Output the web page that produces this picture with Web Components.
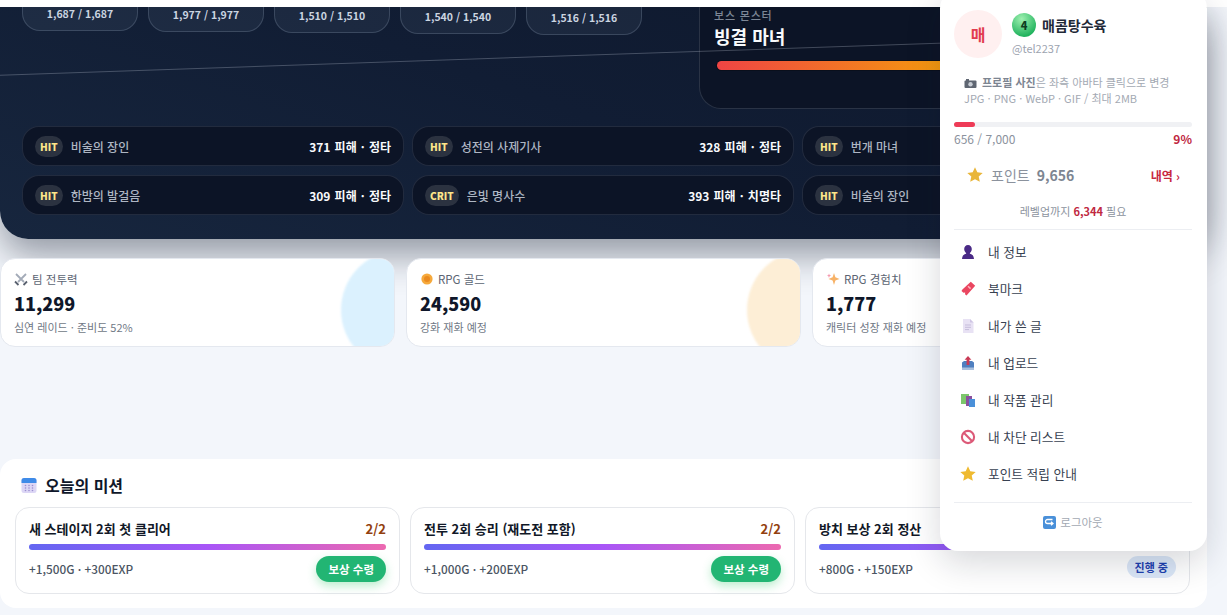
<!doctype html>
<html lang="ko">
<head>
<meta charset="utf-8">
<title>RPG</title>
<style>
  html, body { margin: 0; height: 100%; overflow: hidden; background: #f3f6fb; }
  body { font-family: "Noto Sans CJK KR", "Noto Sans", sans-serif; }
</style>
</head>
<body>
<rpg-page>
  <rpg-hero>
    <party-chip slot="party" hp="1,687 / 1,687" lift="-10"></party-chip>
    <party-chip slot="party" hp="1,977 / 1,977" lift="-9"></party-chip>
    <party-chip slot="party" hp="1,510 / 1,510" lift="-8"></party-chip>
    <party-chip slot="party" hp="1,540 / 1,540" lift="-7"></party-chip>
    <party-chip slot="party" hp="1,516 / 1,516" lift="-6" active></party-chip>
    <hit-row slot="log" tag="HIT" who="비술의 장인" what="371 피해 · 정타"></hit-row>
    <hit-row slot="log" tag="HIT" who="성전의 사제기사" what="328 피해 · 정타"></hit-row>
    <hit-row slot="log" tag="HIT" who="번개 마녀" what="352 피해 · 정타"></hit-row>
    <hit-row slot="log" tag="HIT" who="한밤의 발걸음" what="309 피해 · 정타"></hit-row>
    <hit-row slot="log" tag="CRIT" who="은빛 명사수" what="393 피해 · 치명타"></hit-row>
    <hit-row slot="log" tag="HIT" who="비술의 장인" what="340 피해 · 정타"></hit-row>
  </rpg-hero>

  <stat-row>
    <stat-card label="팀 전투력" value="11,299" sub="심연 레이드 · 준비도 52%" blob="#dbf1fe">
      <svg slot="icon" width="14" height="14" viewBox="0 0 14 14"><path d="M2 2l8 8M12 2l-8 8" stroke="#a3abb8" stroke-width="1.800"/><path d="M1 9.500l3.500 3.500M13 9.500L9.500 13" stroke="#59616f" stroke-width="1.800"/></svg>
    </stat-card>
    <stat-card label="RPG 골드" value="24,590" sub="강화 재화 예정" blob="#fdeed6">
      <svg slot="icon" width="14" height="14" viewBox="0 0 14 14"><circle cx="7" cy="7" r="5.600" fill="#f6a93b"/><circle cx="7" cy="7" r="3" fill="#ea8a1f"/></svg>
    </stat-card>
    <stat-card label="RPG 경험치" value="1,777" sub="캐릭터 성장 재화 예정" blob="#e9e5fd">
      <svg slot="icon" width="14" height="14" viewBox="0 0 14 14"><path d="M8 1l1.400 4.200L13.500 7 9.400 8.600 8 13 6.600 8.600 2.500 7l4.100-1.800z" fill="#f7b267"/><path d="M3 1.500l.6 1.600 1.500.6-1.500.6L3 6l-.6-1.700L1 3.700l1.400-.6z" fill="#f59ab0"/></svg>
    </stat-card>
  </stat-row>

  <mission-panel heading="오늘의 미션">
    <mission-card name="새 스테이지 2회 첫 클리어" count="2/2" reward="+1,500G · +300EXP" state="done"></mission-card>
    <mission-card name="전투 2회 승리 (재도전 포함)" count="2/2" reward="+1,000G · +200EXP" state="done"></mission-card>
    <mission-card name="방치 보상 2회 정산" count="2/2" reward="+800G · +150EXP" state="going"></mission-card>
  </mission-panel>

  <profile-menu>
    <menu-link label="내 정보">
      <svg slot="icon" width="16" height="16" viewBox="0 0 16 16"><path d="M8 1c2.300 0 3.800 1.700 3.800 4 0 1.800-.9 3.100-1.900 3.900v.8c2 .5 3.800 1.500 4.100 5.300H2c.3-3.800 2.100-4.800 4.100-5.300v-.8C5.100 8.100 4.200 6.800 4.200 5 4.200 2.700 5.700 1 8 1z" fill="#4a2a86"/></svg>
    </menu-link>
    <menu-link label="북마크">
      <svg slot="icon" width="16" height="16" viewBox="0 0 16 16"><path d="M10.800.8l4.400 3.900-8.700 9.800-1.500-1.200.2-1.700-1.700.2-2-1.700.9-1.500z" fill="#ea4660"/><path d="M8 5.200l2.600 2.400" stroke="#ffb3bd" stroke-width="1.500"/></svg>
    </menu-link>
    <menu-link label="내가 쓴 글">
      <svg slot="icon" width="16" height="16" viewBox="0 0 16 16"><path d="M3 1h7l3.500 3.500V15H3z" fill="#e8e2f4"/><path d="M10 1v3.500h3.500z" fill="#cfc5e4"/><path d="M5 7h6M5 9.300h6M5 11.600h4" stroke="#c6bddb" stroke-width="1"/></svg>
    </menu-link>
    <menu-link label="내 업로드">
      <svg slot="icon" width="16" height="16" viewBox="0 0 16 16"><path d="M2 7.500L4 6h8l2 1.500V15H2z" fill="#4f7fc0"/><path d="M2 12.500h12V15H2z" fill="#a9c0de"/><path d="M8 1l3.400 3.700H9.400V10H6.600V4.700H4.600z" fill="#c93a55"/></svg>
    </menu-link>
    <menu-link label="내 작품 관리">
      <svg slot="icon" width="16" height="16" viewBox="0 0 16 16"><rect x="1" y="2" width="8" height="10" fill="#7cc66c"/><rect x="6" y="4" width="6" height="10" fill="#8a4f9e"/><rect x="9" y="7" width="6" height="8" fill="#4a90d9"/></svg>
    </menu-link>
    <menu-link label="내 차단 리스트">
      <svg slot="icon" width="16" height="16" viewBox="0 0 16 16"><circle cx="8" cy="8" r="6.100" fill="none" stroke="#dc5a78" stroke-width="2.100"/><path d="M3.800 3.800l8.400 8.400" stroke="#dc5a78" stroke-width="2.100"/></svg>
    </menu-link>
    <menu-link label="포인트 적립 안내">
      <svg slot="icon" width="16" height="16" viewBox="0 0 16 16"><path d="M8 .3l2.300 4.900 5.400.7-4 3.600 1.100 5.300L8 12.200l-4.800 2.600 1.100-5.300-4-3.600 5.400-.7z" fill="#efba30"/></svg>
    </menu-link>
  </profile-menu>
</rpg-page>

<script>
class RpgPage extends HTMLElement {
  constructor() {
    super();
    const shadowRoot = this.attachShadow({mode: 'open'});
    shadowRoot.innerHTML = `
      <style>
        :host {
          display: block;
          position: relative;
          height: 615px;
          overflow: hidden;
        }
        #top {
          position: relative;
          height: 7px;
          background: #fff;
          z-index: 2;
        }
        #main {
          display: flex;
          flex-direction: column;
          width: 1207px;
        }
      </style>
      <div id="top"></div>
      <div id="main"><slot></slot></div>
      <slot name="over"></slot>
    `;
  }
}

class RpgHero extends HTMLElement {
  constructor() {
    super();
    const shadowRoot = this.attachShadow({mode: 'open'});
    shadowRoot.innerHTML = `
      <style>
        :host {
          display: block;
          position: relative;
          height: 232px;
          border-radius: 0 0 28px 28px;
          background: linear-gradient(200deg, #0e182c 0%, #111d34 50%, #17263e 100%);
          box-shadow: 0 16px 36px rgba(15, 23, 42, .42);
        }
        #clip {
          position: absolute;
          inset: 0;
          overflow: hidden;
          border-radius: inherit;
          display: flex;
          flex-direction: column;
          padding: 0 22px;
          box-sizing: border-box;
        }
        #top-row {
          display: flex;
          justify-content: space-between;
          height: 119px;
          flex: none;
        }
        #party {
          display: flex;
          align-items: flex-start;
          gap: 10px;
        }
        #boss {
          width: 508px;
          margin-right: -22px;
          height: 121px;
          margin-top: -19px;
          padding: 18px 14px 0;
          box-sizing: border-box;
          border: 1px solid rgba(148, 163, 184, .22);
          border-radius: 22px;
          background: #0c1426;
          flex: none;
        }
        #boss small {
          display: block;
          font-size: 11px;
          line-height: 16px;
          letter-spacing: .8px;
          color: #7d8796;
          font-weight: 500;
        }
        #boss b {
          display: block;
          font-size: 18px;
          line-height: 26px;
          color: #f8fafc;
        }
        #bar {
          height: 9px;
          margin: 12px 0 0 3px;
          border-radius: 5px;
          background: linear-gradient(90deg, #ef4444, #f59e0b 50%, #f5b70b);
          box-shadow: 0 0 0 1px rgba(0, 0, 0, .25);
        }
        #log {
          display: grid;
          grid-template-columns: repeat(3, 382px);
          column-gap: 8px;
          row-gap: 9px;
        }
        #line {
          position: absolute;
          left: -10px;
          top: 68px;
          width: 1000px;
          height: 1px;
          background: rgba(203, 213, 225, .28);
          transform: rotate(-1.95deg);
          transform-origin: 0 0;
        }
      </style>
      <div id="clip">
        <div id="top-row">
          <div id="party"><slot name="party"></slot></div>
          <div id="boss">
            <small>보스 몬스터</small>
            <b>빙결 마녀</b>
            <div id="bar"></div>
          </div>
        </div>
        <div id="log"><slot name="log"></slot></div>
        <div id="line"></div>
      </div>
    `;
  }
}

class PartyChip extends HTMLElement {
  constructor() {
    super();
    const shadowRoot = this.attachShadow({mode: 'open'});
    shadowRoot.innerHTML = `
      <style>
        :host {
          display: block;
          width: 116px;
          height: 34px;
          box-sizing: border-box;
          position: relative;
          text-align: center;
          border: 1px solid rgba(148, 163, 184, .26);
          border-radius: 0 0 18px 18px;
          background: rgba(148, 163, 184, .09);
          color: #cbd5e1;
          font-size: 10.500px;
          font-weight: 700;
          line-height: 17px;
          padding-top: 7px;
        }
        :host([active])::before {
          content: '';
          position: absolute;
          top: -1px;
          left: 11px;
          right: 11px;
          height: 2px;
          background: #5fd6c8;
        }
      </style>
      <span id="hp"></span>
    `;
  }

  connectedCallback() {
    this.shadowRoot.querySelector('#hp').textContent = this.getAttribute('hp');
    this.style.marginTop = this.getAttribute('lift') + 'px';
  }
}

class HitRow extends HTMLElement {
  constructor() {
    super();
    const shadowRoot = this.attachShadow({mode: 'open'});
    shadowRoot.innerHTML = `
      <style>
        :host {
          display: flex;
          align-items: center;
          height: 40px;
          box-sizing: border-box;
          padding: 0 12px;
          border: 1px solid rgba(148, 163, 184, .17);
          border-radius: 17px;
          background: #0c1426;
          font-size: 12px;
        }
        #tag {
          height: 21px;
          padding: 0 5px;
          border-radius: 11px;
          background: #2b3240;
          color: #fde68a;
          font-size: 10px;
          font-weight: 800;
          line-height: 21px;
          margin-right: 8px;
        }
        #who {
          color: #aeb6c3;
          font-weight: 500;
        }
        #what {
          margin-left: auto;
          color: #f8fafc;
          font-weight: 700;
          word-spacing: .8px;
        }
      </style>
      <span id="tag"></span>
      <span id="who"></span>
      <span id="what"></span>
    `;
  }

  connectedCallback() {
    for (const key of ['tag', 'who', 'what']) {
      this.shadowRoot.querySelector('#' + key).textContent = this.getAttribute(key);
    }
  }
}

class StatRow extends HTMLElement {
  constructor() {
    super();
    const shadowRoot = this.attachShadow({mode: 'open'});
    shadowRoot.innerHTML = `
      <style>
        :host {
          display: grid;
          grid-template-columns: repeat(3, 395px);
          gap: 11px;
          margin-top: 19px;
          position: relative;
        }
      </style>
      <slot></slot>
    `;
  }
}

class StatCard extends HTMLElement {
  constructor() {
    super();
    const shadowRoot = this.attachShadow({mode: 'open'});
    shadowRoot.innerHTML = `
      <style>
        :host {
          display: block;
          position: relative;
          height: 89px;
          box-sizing: border-box;
          padding: 12px 13px;
          overflow: hidden;
          background: #fff;
          border: 1px solid #e4e8ef;
          border-radius: 15px;
        }
        #blob {
          position: absolute;
          width: 120px;
          height: 120px;
          right: -67px;
          top: -9px;
          border-radius: 50%;
          filter: blur(.8px);
        }
        #label {
          display: flex;
          align-items: center;
          gap: 4px;
          font-size: 11.500px;
          line-height: 16px;
          color: #5b6472;
        }
        #value {
          font-size: 18px;
          line-height: 28px;
          font-weight: 800;
          color: #0f172a;
          margin-top: 2px;
        }
        #sub {
          font-size: 11px;
          line-height: 16px;
          color: #6f7885;
          margin-top: 2px;
        }
      </style>
      <div id="blob"></div>
      <div id="label"><slot name="icon"></slot><span id="label-text"></span></div>
      <div id="value"></div>
      <div id="sub"></div>
    `;
  }

  connectedCallback() {
    const root = this.shadowRoot;
    root.querySelector('#label-text').textContent = this.getAttribute('label');
    root.querySelector('#value').textContent = this.getAttribute('value');
    root.querySelector('#sub').textContent = this.getAttribute('sub');
    root.querySelector('#blob').style.background = this.getAttribute('blob');
  }
}

class MissionPanel extends HTMLElement {
  constructor() {
    super();
    const shadowRoot = this.attachShadow({mode: 'open'});
    shadowRoot.innerHTML = `
      <style>
        :host {
          display: block;
          height: 149px;
          margin-top: 112px;
          box-sizing: border-box;
          padding: 14px 15px;
          background: #fff;
          border-radius: 16px;
        }
        #head {
          display: flex;
          align-items: center;
          gap: 8px;
          height: 24px;
          padding-left: 6px;
          margin-bottom: 10px;
        }
        #title {
          font-size: 16px;
          font-weight: 700;
          color: #0f172a;
        }
        #cards {
          display: grid;
          grid-template-columns: repeat(3, 385px);
          gap: 10px;
        }
      </style>
      <div id="head">
        <svg width="16" height="16" viewBox="0 0 16 16"><rect x=".5" y="1" width="15" height="15" rx="2.500" fill="#dcd6f5"/><path d="M.5 6V3.500A2.500 2.500 0 0 1 3 1h10a2.500 2.500 0 0 1 2.500 2.500V6z" fill="#3f8be8"/><g fill="#9c8fd0"><circle cx="4.500" cy="8.500" r=".8"/><circle cx="8" cy="8.500" r=".8"/><circle cx="11.500" cy="8.500" r=".8"/><circle cx="4.500" cy="11" r=".8"/><circle cx="8" cy="11" r=".8"/><circle cx="11.500" cy="11" r=".8"/><circle cx="4.500" cy="13.500" r=".8"/><circle cx="8" cy="13.500" r=".8"/><circle cx="11.500" cy="13.500" r=".8"/></g></svg>
        <span id="title"></span>
      </div>
      <div id="cards"><slot></slot></div>
    `;
  }

  connectedCallback() {
    this.shadowRoot.querySelector('#title').textContent = this.getAttribute('heading');
  }
}

class MissionCard extends HTMLElement {
  constructor() {
    super();
    const shadowRoot = this.attachShadow({mode: 'open'});
    shadowRoot.innerHTML = `
      <style>
        :host {
          display: block;
          height: 87px;
          box-sizing: border-box;
          padding: 11px 13px;
          border: 1px solid #e5e7eb;
          border-radius: 14px;
          background: #fff;
        }
        #row {
          display: flex;
          justify-content: space-between;
          font-size: 13px;
          line-height: 20px;
          font-weight: 700;
          color: #111827;
        }
        #count {
          color: #92400e;
        }
        #bar {
          height: 6px;
          margin-top: 5px;
          border-radius: 3px;
          background: linear-gradient(90deg, #6366f1, #a855f7 50%, #ec69b0);
        }
        #foot {
          display: flex;
          justify-content: space-between;
          align-items: flex-start;
          margin-top: 6px;
        }
        #reward {
          font-size: 11.800px;
          font-weight: 500;
          line-height: 26px;
          color: #4b5563;
        }
        #state {
          font-size: 11.500px;
          font-weight: 700;
          border-radius: 13px;
        }
        .done {
          height: 26px;
          line-height: 26px;
          padding: 0 12px;
          color: #fff;
          background: #22b573;
          box-shadow: 0 4px 10px rgba(34, 197, 94, .3);
        }
        .going {
          height: 22px;
          line-height: 22px;
          padding: 0 8px;
          color: #1e40af;
          background: #dbe7f8;
          font-size: 11px !important;
        }
      </style>
      <div id="row"><span id="name"></span><span id="count"></span></div>
      <div id="bar"></div>
      <div id="foot"><span id="reward"></span><span id="state"></span></div>
    `;
  }

  connectedCallback() {
    const root = this.shadowRoot;
    for (const key of ['name', 'count', 'reward']) {
      root.querySelector('#' + key).textContent = this.getAttribute(key);
    }
    const state = root.querySelector('#state');
    const done = this.getAttribute('state') === 'done';
    state.className = done ? 'done' : 'going';
    state.textContent = done ? '보상 수령' : '진행 중';
  }
}

class ProfileMenu extends HTMLElement {
  constructor() {
    super();
    this.slot = 'over';
    const shadowRoot = this.attachShadow({mode: 'open'});
    shadowRoot.innerHTML = `
      <style>
        :host {
          display: block;
          position: absolute;
          z-index: 5;
          left: 940px;
          top: -10px;
          width: 267px;
          height: 561px;
          box-sizing: border-box;
          padding: 20px 15px 0 14px;
          background: #fff;
          border-radius: 18px;
          box-shadow: 0 12px 34px rgba(15, 23, 42, .17);
        }
        #who {
          display: flex;
          gap: 10px;
          height: 48px;
        }
        #avatar {
          width: 48px;
          height: 48px;
          border-radius: 50%;
          background: #fff0f0;
          color: #e23d4f;
          font-size: 16px;
          font-weight: 700;
          line-height: 48px;
          text-align: center;
          flex: none;
        }
        #name-line {
          display: flex;
          align-items: center;
          gap: 6px;
          margin-top: 3px;
          height: 24px;
        }
        #level {
          width: 24px;
          height: 24px;
          border-radius: 50%;
          background: radial-gradient(circle at 40% 25%, #9ef0b0, #22b35e 75%);
          color: #0f3d22;
          font-size: 11px;
          font-weight: 800;
          line-height: 24px;
          text-align: center;
        }
        #name {
          font-size: 14px;
          font-weight: 700;
          color: #1f2937;
        }
        #handle {
          font-size: 11px;
          line-height: 16px;
          color: #9ca3af;
          margin-top: 3px;
        }
        #note {
          margin: 16px 0 0 10px;
          font-size: 11px;
          line-height: 16px;
          color: #a3a9b3;
        }
        #note b {
          color: #7d8591;
        }
        #note svg {
          vertical-align: -2px;
          margin-right: 5px;
        }
        #xp {
          height: 5px;
          margin-top: 16px;
          border-radius: 3px;
          background: #f0f1f4;
        }
        #xp div {
          width: 21px;
          height: 5px;
          border-radius: 3px;
          background: #ee3b57;
        }
        #xp-text {
          display: flex;
          justify-content: space-between;
          font-size: 12px;
          line-height: 18px;
          color: #8b929d;
          margin-top: 3px;
        }
        #xp-text b {
          color: #c0283f;
        }
        #points {
          display: flex;
          align-items: center;
          height: 40px;
          margin-top: 7px;
          padding: 0 12px 0 13px;
          font-size: 14px;
          color: #8b929d;
        }
        #points svg {
          margin-right: 8px;
        }
        #points b {
          font-size: 14px;
          margin-left: 7px;
          color: #7d8591;
        }
        #points a {
          margin-left: auto;
          font-size: 12px;
          font-weight: 700;
          color: #c8283f;
        }
        #need {
          text-align: center;
          font-size: 11px;
          line-height: 16px;
          color: #8b929d;
          margin-top: 8px;
          padding-bottom: 10px;
          border-bottom: 1px solid #eceef2;
        }
        #need b {
          color: #c0283f;
        }
        #links {
          display: flex;
          flex-direction: column;
          margin-top: 3px;
        }
        #out {
          display: flex;
          justify-content: center;
          align-items: center;
          gap: 4px;
          margin-top: 10px;
          padding-top: 11px;
          border-top: 1px solid #eceef2;
          font-size: 11.500px;
          line-height: 17px;
          color: #a3a9b3;
        }
      </style>
      <div id="who">
        <div id="avatar">매</div>
        <div>
          <div id="name-line"><span id="level">4</span><span id="name">매콤탕수육</span></div>
          <div id="handle">@tel2237</div>
        </div>
      </div>
      <div id="note">
        <svg width="13" height="11" viewBox="0 0 13 11"><rect x=".5" y="2.500" width="12" height="7.500" rx="1" fill="#5f6672"/><circle cx="6.500" cy="6.200" r="2.200" fill="#c7ccd4"/><rect x="2" y="1" width="3" height="2" fill="#5f6672"/></svg><b>프로필 사진</b>은 좌측 아바타 클릭으로 변경<br>JPG · PNG · WebP · GIF / 최대 2MB
      </div>
      <div id="xp"><div></div></div>
      <div id="xp-text"><span>656 / 7,000</span><b>9%</b></div>
      <div id="points">
        <svg width="16" height="16" viewBox="0 0 16 16"><path d="M8 .3l2.300 4.900 5.400.7-4 3.600 1.100 5.300L8 12.200l-4.800 2.600 1.100-5.300-4-3.600 5.400-.7z" fill="#e9b63a"/></svg>
        <span>포인트</span><b>9,656</b><a>내역 ›</a>
      </div>
      <div id="need">레벨업까지 <b>6,344</b> 필요</div>
      <div id="links"><slot></slot></div>
      <div id="out">
        <svg width="13" height="13" viewBox="0 0 13 13"><rect width="13" height="13" rx="2" fill="#4a90d9"/><path d="M9.500 3.500H4.500a2 2 0 0 0 0 4H10M8 5.700L10 7.500 8 9.300" fill="none" stroke="#fff" stroke-width="1.300"/></svg>
        <span>로그아웃</span>
      </div>
    `;
  }
}

class MenuLink extends HTMLElement {
  constructor() {
    super();
    const shadowRoot = this.attachShadow({mode: 'open'});
    shadowRoot.innerHTML = `
      <style>
        :host {
          display: flex;
          align-items: center;
          gap: 12px;
          height: 37px;
          padding-left: 6px;
          font-size: 12.700px;
          color: #374151;
        }
        ::slotted(svg) {
          flex: none;
        }
      </style>
      <slot name="icon"></slot>
      <span id="label"></span>
    `;
  }

  connectedCallback() {
    this.shadowRoot.querySelector('#label').textContent = this.getAttribute('label');
  }
}

customElements.define('rpg-page', RpgPage);
customElements.define('rpg-hero', RpgHero);
customElements.define('party-chip', PartyChip);
customElements.define('hit-row', HitRow);
customElements.define('stat-row', StatRow);
customElements.define('stat-card', StatCard);
customElements.define('mission-panel', MissionPanel);
customElements.define('mission-card', MissionCard);
customElements.define('profile-menu', ProfileMenu);
customElements.define('menu-link', MenuLink);
</script>
</body>
</html>
